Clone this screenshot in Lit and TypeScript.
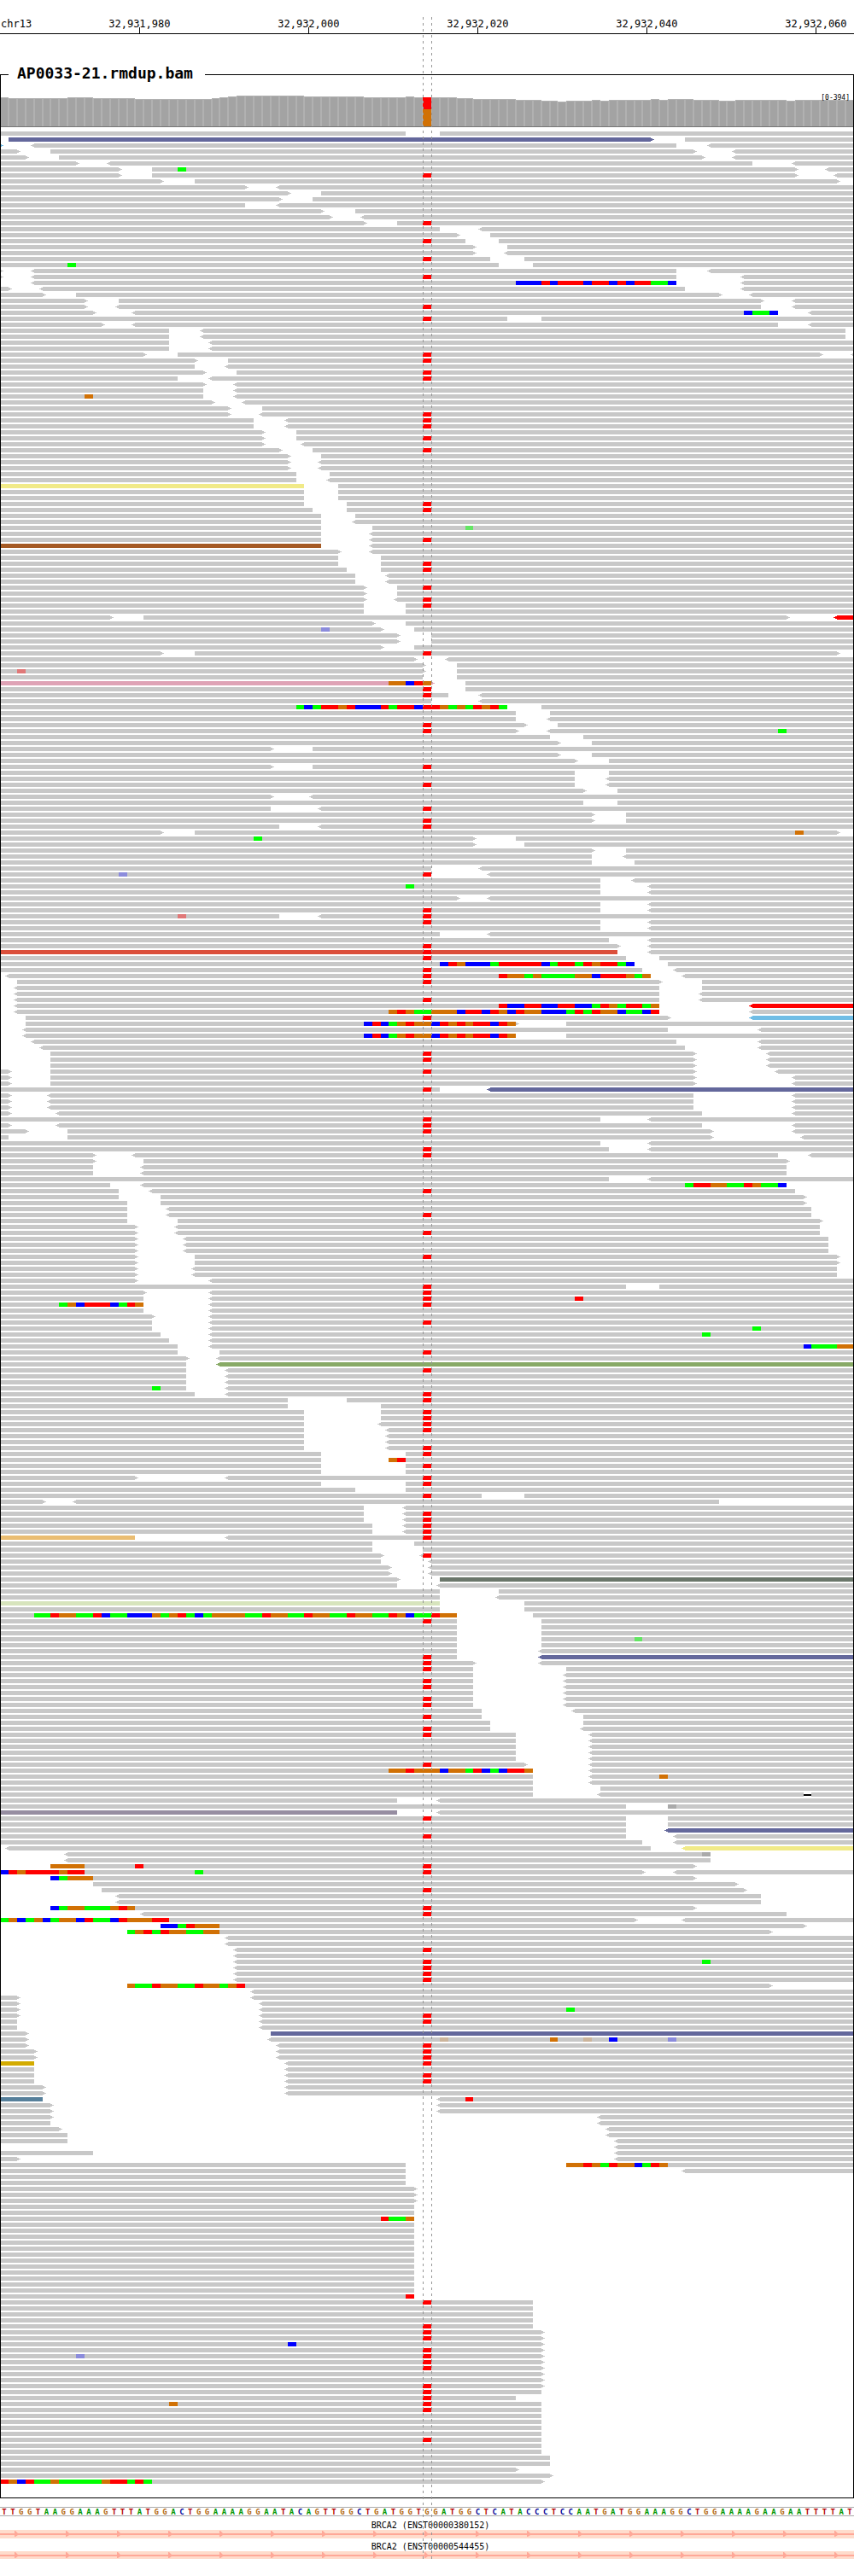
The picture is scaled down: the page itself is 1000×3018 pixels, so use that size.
import { LitElement, html, css } from "lit";
import { customElement, property } from "lit/decorators.js";
import { styleMap } from "lit/directives/style-map.js";
import { classMap } from "lit/directives/class-map.js";

const BASES = 101;
const FIRST_BASE = 32931964;
const VARIANT = 50;
const SEQUENCE =
  "TTGGTAAGGAAAGTTTATGGACTGGAAAAGGAATACAGTTGGCTGATGGTGGATGGCTCATACCCTCCAATGATGGAAAGGCTGGAAAAGAAGAATTTTAT";

// Column heights in pixels, as [number of bases, height].
const COVERAGE: [number, number][] = [
  [1, 34], [7, 33], [3, 34], [5, 33], [9, 32], [1, 33], [1, 34], [1, 35],
  [8, 36], [7, 35], [5, 34], [1, 35], [5, 34], [2, 33], [5, 32], [3, 31],
  [2, 30], [1, 29], [3, 30], [1, 31], [1, 30], [5, 31], [1, 32], [1, 31],
  [3, 32], [3, 31], [2, 30], [6, 31], [1, 30], [7, 31],
];

/*
 * One line per pile-up row.
 *   12-40     read over the bases 12 to 40; an empty side runs off the view
 *   < >       read tip on that side; ":name" after it is a read colour
 *   *         T at the variant base
 *   A21       mismatch at one base (lower case: low quality, D: deletion)
 *   @61:CCT   soft-clipped bases from 61 on
 *   x3        the row occurs three times
 */
const PILEUP = `
-48 52-
1-77>:slate 81-
-0>:sky <4-80 <84-
-2> 6-82> <87-
-3> 7-83> <87-
-9> <13-89 <94-
-14> 18-94> <98- A21
-14> 18-94> <99- *
-19> 23-99>
-29> <33-
-34> 38-
-33> 37-
-29 <33-
-38> 42-
-39> <43-
-43> 47- *
-52 <57-
-54> 58-
-55 59- *
-56> 60-
-56> <60-
-58 62- *
-59 63- A8
-0> <4-80 <84-
-0> <4-80 <88- *
<4-80 <88- @61:CCCTCTTTCTTCTCTTAAC
-1> <5-81 <88-
-5> 9-85> <89-
-10> 14-90> <94-
-10> <14-90 <94- *
-11> <16-92 <96- @88:CAAC
-60 64- *
-12> <16-92 <96-
-20 <24-100 x2
-20 <25- x2
-17> 21-97> <101- *
-23> 27- *
-23 <27-
-24> 28- *
-21 <25- *
-24> <28-
-24 <28-
-24 <28- G10
-25> <29-
-27> 31-
-27> <31- *
-30 <34- * x2
-31> 35-
-31> 35- *
-31> <36-
-33> 37- *
-34> 38-
-34> <38- x2
-35 39-
-35 <39-
-36:khaki 40-
-36 40- x2
-36 41- *
-37 41- *
-38 42-
-38 <42-
-38 44- a55
-38 <44-
-38 <44- *
-38:brown <44-
-40> <44-
-40 45-
-40 45- *
-41 45- *
-42 <46- x2
-43> 47- *
-43> 47-
-43> <47- *
-43 48- *
-43 48-
-13> 17-93> <99-:red
-44> 48-
-45> 49- c38
-47> 51- x2
-45> 49-
-19> 23-99> *
-49> <53-
-50> 54-
-50> 54- t2
-50 54-
-51>:pink 55- @46:GGCTG
-51 55- *
-53 <57- *
-51 <57-
-60 64- @35:ACATTGTCCCTATTCTTGAGATGTA
-61 65-
-61 <65-
-62> 66- *
-61> <65- * A92
-65 69-
-66> 70-
-32> 37-
-66> 70-
-68> 72-
-32> 37- *
-68 72-
-68 <72-
-68 <72- *
-69> 73-
-32> <37-
-69 73-
-32 <38- *
-70> 74-
-70> 74- *
-33 <38- *
-19> 23-99> G94
-56> 61- A30
-56> 62-
-70> 74-
-70 <74-
-70 75-
-51 <57-
-51 <58- * c14
-71 <75-
-71 <77- A48
-71 <77-
-54> <58-
-71 <77-
-71 <77- *
-33 <38- * t21
-71 <77- *
-71 <77-
-52 <58-
-72 <77-
-73> <77- *
-73:tomato <77- *
-74 78- *
-75 79- @52:CTGCCCATTTTTCATTATGTTAC
-76 <80- *
<1-77 <81- * @59:TGGAGAAAAGGCTTTGAG
2-78> 83- *
<2-78 83-
<2-78 <83-
<2-78 <83- *
<2-78 <89-:red @59:TCCTTCCTTCCATGATTAG
<2-78 <89- @46:GTGAAGGGCTTCTGCTGGCCCATATGGCAACT
3-79> <89-:sky *
3-61> 67- @43:CTCAGTGGCTGTGTTCTG
<3-79 <90-
<3-61 67- @43:CTCAGTGGCTGTGTTCTG
<4-80 <90-
<5-81 <90-
6-82> <91- * x2
6-82> <91-
-1> 6-82> <92- *
-1> 6-82> <94- x2
-52 <58-:slate *
-1> <6-82 <94- x3
-1> <7-83 <94-
-71 <77- *
-1> <7-83 <94- *
-3> 8-84> <94- *
-1 8-84> <95-
-71 <77-
-72 <77- *
-11> <16-92 <96- *
-11> 17-93>
-11 <17-93 x2
-72 <77-
-13 <17-93 @81:ATTGGAATGAAC
-14 <18-94 *
-14 19-95>
-15 19-95>
-15 <20-96
-15 <20-96 *
-15 21-97>
-16> <21-97
-16> <21-97 *
-16> <22-98 x3
-16> 23-99> *
-16> 23-99>
-16> <23-99 x2
-16> <25-
-74 78- *
-17> <25- *
-17 <25- * T68
-17 <25- * @7:AGCTTTCATG
-17 <25-
-18> <25-
-18 <25- *
-18 <25- A89
-19 <25- A83
-20 <25-
-21 <25- @95:CAAAGG
-21 26- *
-22> <26-
-22 <26-:olive
-22 <27- *
-22 <27- x2
-22 <27- A18
-23 <27- *
-34 41- *
-34 45-
-36 45- * x2
-36 <45- *
-36 <46- *
-36 <46- x2
-36 <46- *
-38 48- *
-38 48- @46:GT
-38 48- *
-38 48-
-16> <27- *
-38 48- *
-42 48-
-57 62- *
-5> <9-85
-43 <48-
-43 <48- * x2
-44 <48- * x2
-16:amber <27- *
-44 49-
-44 50-
-45> <50- *
-45 <51-
-46> <51- x2
-47> 52-:moss
-47 <52-
-52 59-
-52 <59-
-52:lime 62-
-52 62-
-54 63- @4:AATGGAATCAACCCGAGTACAGGGGAATGGAATGGAATGGAATGCAATGG
-54 64- *
-54 64- x2
-54 64- a75
-54 64-
-54 <64-
-54 <64-:slate *
-56> <64- *
-56 67- *
-56 <67-
-56 <67- * x2
-56 <67-
-56 <67- * x2
-57 <68-
-57 69- *
-58 69-
-58 <69- *
-61 <70- *
-61 <70- x4
-62> <70- *
-63 <70- @46:GGTGGGCGGATCACTTG
-63 <70- G78
-63 <70-
-63 71-
-63 <71- D95
-47 <52-
-74 79- n79
-47:mauve <52-
-74 79- *
-74 79-
-74 <79-:slate
-74 <80- *
-76 <80-
<1-77 <81-:khaki
<8-84 n83
<8-84
6-82> @6:GGGG T16 *
-76> <80- @0:CTGTTTTGTT A23 *
6-82> @6:CAGGG
11-87>
12-88> *
<14-90 x2
6-82> @6:CAGGAAAGTG *
<17-93 *
-75> <81- @0:AGCAGCAGGCTAACTGGGTT
19-95> @19:CCATGGG
15-91> @15:AGTATGGAAGG
<27- x2
<28- *
<28-
<28- * A83
<28- * x3
15-91> @15:GAATGGAATGGAGT
<30-
-2> <30-
-2> <31-
-2> <31- A67
-2> <31- *
-2 <31- *
-2 <31-
-3> 32-:slate
-3> <32- g52 G65 g69 C72 c79
-3> <33- *
-4> <33- * x2
-4:gold <34- *
-4 <34-
-4 <34- * x2
-5> <34- x2
-5:steel <52- T55
-6> <52- x2
-6> <71-
-6 <71-
-7> <72-
-8 <72-
-8 <73-
<73-
-11 <73-
-2> <73-
-48 67- @67:GGTGATGGCATG
-48 <81-
-48 x2
-49> x3
-49 x2
-49 @45:TAAG
-49 x12
-49 T48
-63 *
-63 x3
-63 *
-64> * x2
-64> C34
-64> *
-64> * c9
-64> * x2
-64> x2
-64> *
-64 *
-61 *
-64 * G20
-64 *
-64 x4
-64 *
-64 x2
-65 x2
-61>
-65>
-64> @0:TGCTAAGAAAAAGTTATA
`;

interface Read {
  start: number;
  end: number;
  left: boolean;
  right: boolean;
  tint: string;
}
interface Cell {
  at: number;
  kind: string;
}
interface Row {
  reads: Read[];
  cells: Cell[];
}

function parseRows(source: string): Row[] {
  const rows: Row[] = [];
  for (const line of source.trim().split("\n")) {
    const row: Row = { reads: [], cells: [] };
    let times = 1;
    for (const token of line.split(" ")) {
      const read = /^(<?)(\d*)-(\d*)(>?)(?::(\w+))?$/.exec(token);
      if (read) {
        row.reads.push({
          start: read[2] ? Number(read[2]) : 0,
          end: read[3] ? Number(read[3]) : BASES,
          left: read[1] !== "",
          right: read[4] !== "",
          tint: read[5] ?? "plain",
        });
      } else if (token === "*") {
        row.cells.push({ at: VARIANT, kind: "T" });
      } else if (token[0] === "x") {
        times = Number(token.slice(1));
      } else if (token[0] === "@") {
        const [at, bases] = token.slice(1).split(":");
        [...bases].forEach((kind, i) => row.cells.push({ at: Number(at) + i, kind }));
      } else {
        row.cells.push({ at: Number(token.slice(1)), kind: token[0] });
      }
    }
    for (let i = 0; i < times; i++) rows.push(row);
  }
  return rows;
}

const ROWS = parseRows(PILEUP);

const baseGrid = css`
  .bases {
    display: grid;
    grid-template-columns: repeat(101, minmax(0, 1fr));
  }
`;

@customElement("position-ruler")
class PositionRuler extends LitElement {
  static styles = [
    baseGrid,
    css`
      :host {
        display: block;
        overflow: hidden;
      }
      .bases {
        height: 39px;
        border-bottom: 1px solid #000;
        align-items: end;
        font-size: 12px;
        line-height: 8px;
        white-space: nowrap;
      }
      .chrom {
        grid-area: 1 / 1;
        padding: 0 0 7px 1px;
      }
      .mark {
        grid-row: 1;
        display: flex;
        flex-direction: column;
        align-items: center;
      }
      .tick {
        width: 1px;
        height: 7px;
        background: #000;
      }
    `,
  ];

  render() {
    const marks = [16, 36, 56, 76, 96];
    return html`<div class="bases">
      <span class="chrom">chr13</span>
      ${marks.map(
        (m) => html`<div class="mark" style=${styleMap({ gridColumn: `${m + 1}` })}>
          <span>${(FIRST_BASE + m).toLocaleString("en-US")}</span><i class="tick"></i>
        </div>`,
      )}
    </div>`;
  }
}

@customElement("coverage-plot")
class CoveragePlot extends LitElement {
  static styles = [
    baseGrid,
    css`
      :host {
        display: block;
        position: relative;
      }
      .bases {
        height: 49px;
        align-items: end;
        border-bottom: 1px solid #767676;
      }
      .bar {
        box-sizing: border-box;
        background: #a3a3a3;
        border: 1px solid #b1b1b1;
        border-bottom: 0;
      }
      .variant {
        border-width: 0;
        background: linear-gradient(#f00 14px, #d17105 14px);
      }
      .range {
        position: absolute;
        top: 11px;
        right: 5px;
        font-size: 8px;
        line-height: 10px;
      }
    `,
  ];

  render() {
    const heights = COVERAGE.flatMap(([n, h]) => Array<number>(n).fill(h));
    return html`<div class="bases">
        ${heights.map(
          (h, i) => html`<div
            class=${classMap({ bar: true, variant: i === VARIANT })}
            style=${styleMap({ height: `${h}px` })}
          ></div>`,
        )}
      </div>
      <span class="range">[0-394]</span>`;
  }
}

@customElement("read-pileup")
class ReadPileup extends LitElement {
  @property({ attribute: false }) rows: Row[] = [];

  static styles = [
    baseGrid,
    css`
      :host {
        display: flex;
        flex-direction: column;
        gap: 2px;
        padding: 5px 0 16px;
        overflow: hidden;
      }
      .bases {
        height: 5px;
      }
      .read {
        grid-row: 1;
        background: currentColor;
        position: relative;
      }
      .stub {
        width: 0;
      }
      .stub.left {
        justify-self: end;
      }
      .left::before,
      .right::after {
        content: "";
        position: absolute;
        top: 0;
        width: 4px;
        height: 5px;
        background:
          linear-gradient(currentColor, currentColor) var(--root) 1px / 2px 3px no-repeat,
          linear-gradient(currentColor, currentColor) 0 2px / 4px 1px no-repeat;
      }
      .left::before {
        --root: 2px;
        right: 100%;
      }
      .right::after {
        --root: 0;
        left: 100%;
      }
      .plain { color: #c8c8c8; }
      .slate { color: #64689c; }
      .sky { color: #70bde5; }
      .khaki { color: #f1ea88; }
      .brown { color: #a55a24; }
      .red { color: #f00; }
      .pink { color: #dfa3b6; }
      .tomato { color: #db4f3b; }
      .olive { color: #88aa66; }
      .amber { color: #eabd72; }
      .moss { color: #6b776b; }
      .lime { color: #d7e4bd; }
      .mauve { color: #968da1; }
      .gold { color: #d3ab00; }
      .steel { color: #57809b; }
      .cell {
        grid-row: 1;
        position: relative;
      }
      .A { background: #0f0; }
      .C { background: #00f; }
      .G { background: #d17105; }
      .T { background: #f00; }
      .a { background: #64e664; }
      .c { background: #8c8cdc; }
      .g { background: #ccb59c; }
      .t { background: #e07878; }
      .n { background: #aaa; }
      .D {
        background: linear-gradient(#fff 2px, #000 2px, #000 4px, #fff 4px);
      }
    `,
  ];

  private drawRead(read: Read) {
    const start = Math.min(read.start, BASES - 1);
    const stub = read.start >= BASES || read.end === 0;
    const classes = {
      read: true,
      [read.tint]: true,
      left: read.left,
      right: read.right,
      stub,
    };
    const gridColumn = `${start + 1} / ${stub ? start + 2 : read.end + 1}`;
    return html`<i class=${classMap(classes)} style=${styleMap({ gridColumn })}></i>`;
  }

  render() {
    return this.rows.map(
      (row) => html`<div class="bases">
        ${row.reads.map((read) => this.drawRead(read))}
        ${row.cells.map(
          (c) => html`<i class="cell ${c.kind}" style=${styleMap({ gridColumn: `${c.at + 1}` })}></i>`,
        )}
      </div>`,
    );
  }
}

@customElement("sequence-track")
class SequenceTrack extends LitElement {
  static styles = [
    baseGrid,
    css`
      :host {
        display: block;
      }
      .bases {
        height: 9px;
        border: solid #aaa;
        border-width: 1px 0;
        font-size: 9px;
        font-weight: bold;
        line-height: 10px;
        text-align: center;
      }
      .A { color: #009600; }
      .C { color: #000096; }
      .G { color: #b4690f; }
      .T { color: #b40000; }
    `,
  ];

  render() {
    return html`<div class="bases">
      ${[...SEQUENCE].map((b) => html`<span class=${b}>${b}</span>`)}
    </div>`;
  }
}

@customElement("gene-track")
class GeneTrack extends LitElement {
  @property() label = "";

  static styles = css`
    :host {
      display: block;
    }
    .label {
      font-size: 10px;
      line-height: 10px;
      padding: 5px 0 0 8px;
      text-align: center;
    }
    .exon {
      display: block;
      width: 100%;
      height: 10px;
      background: #ffdccc;
    }
    :host(:last-child) .exon {
      height: 9px;
    }
  `;

  render() {
    const id = `strand-${this.label.replace(/\W/g, "")}`;
    return html`<div class="label">${this.label}</div>
      <svg class="exon" aria-hidden="true">
        <defs>
          <pattern id=${id} width="60" height="10" patternUnits="userSpaceOnUse">
            <path d="M0 4H60V6H0Z M17 1L18 1L21 4V6L18 8H17Z" fill="#ffa898" />
          </pattern>
        </defs>
        <rect width="100%" height="10" fill="url(#${id})" />
      </svg>`;
  }
}

@customElement("app-root")
class AppRoot extends LitElement {
  static styles = css`
    :host {
      display: block;
      position: relative;
      padding-bottom: 20px;
      overflow: hidden;
      background: #fff;
      color: #000;
      font-family: "DejaVu Sans Mono", "Liberation Mono", monospace;
    }
    .sample {
      margin: 36px 0 10px;
      padding: 0;
      border: 1px solid #000;
      min-width: 0;
    }
    .name {
      margin-left: 9px;
      padding: 0 14px 0 10px;
      height: 23px;
      font-size: 18px;
      font-weight: bold;
      line-height: 20px;
    }
    .tracks {
      margin: 0 -1px;
      clip-path: inset(0 1px);
    }
    .genes {
      margin-top: 1px;
    }
    .guides {
      position: absolute;
      inset: 20px 0;
      display: grid;
      grid-template-columns: 50fr 1fr 50fr;
      pointer-events: none;
    }
    .dash {
      grid-row: 1;
      width: 1px;
      background: repeating-linear-gradient(#969696 0 3px, transparent 3px 7px);
    }
    .from {
      grid-column: 2;
    }
    .to {
      grid-column: 3;
    }
  `;

  render() {
    return html`
      <position-ruler></position-ruler>
      <fieldset class="sample">
        <legend class="name">AP0033-21.rmdup.bam</legend>
        <div class="tracks">
          <coverage-plot></coverage-plot>
          <read-pileup .rows=${ROWS}></read-pileup>
        </div>
      </fieldset>
      <sequence-track></sequence-track>
      <div class="genes">
        <gene-track label="BRCA2 (ENST00000380152)"></gene-track>
        <gene-track label="BRCA2 (ENST00000544455)"></gene-track>
      </div>
      <div class="guides"><i class="dash from"></i><i class="dash to"></i></div>
    `;
  }
}
